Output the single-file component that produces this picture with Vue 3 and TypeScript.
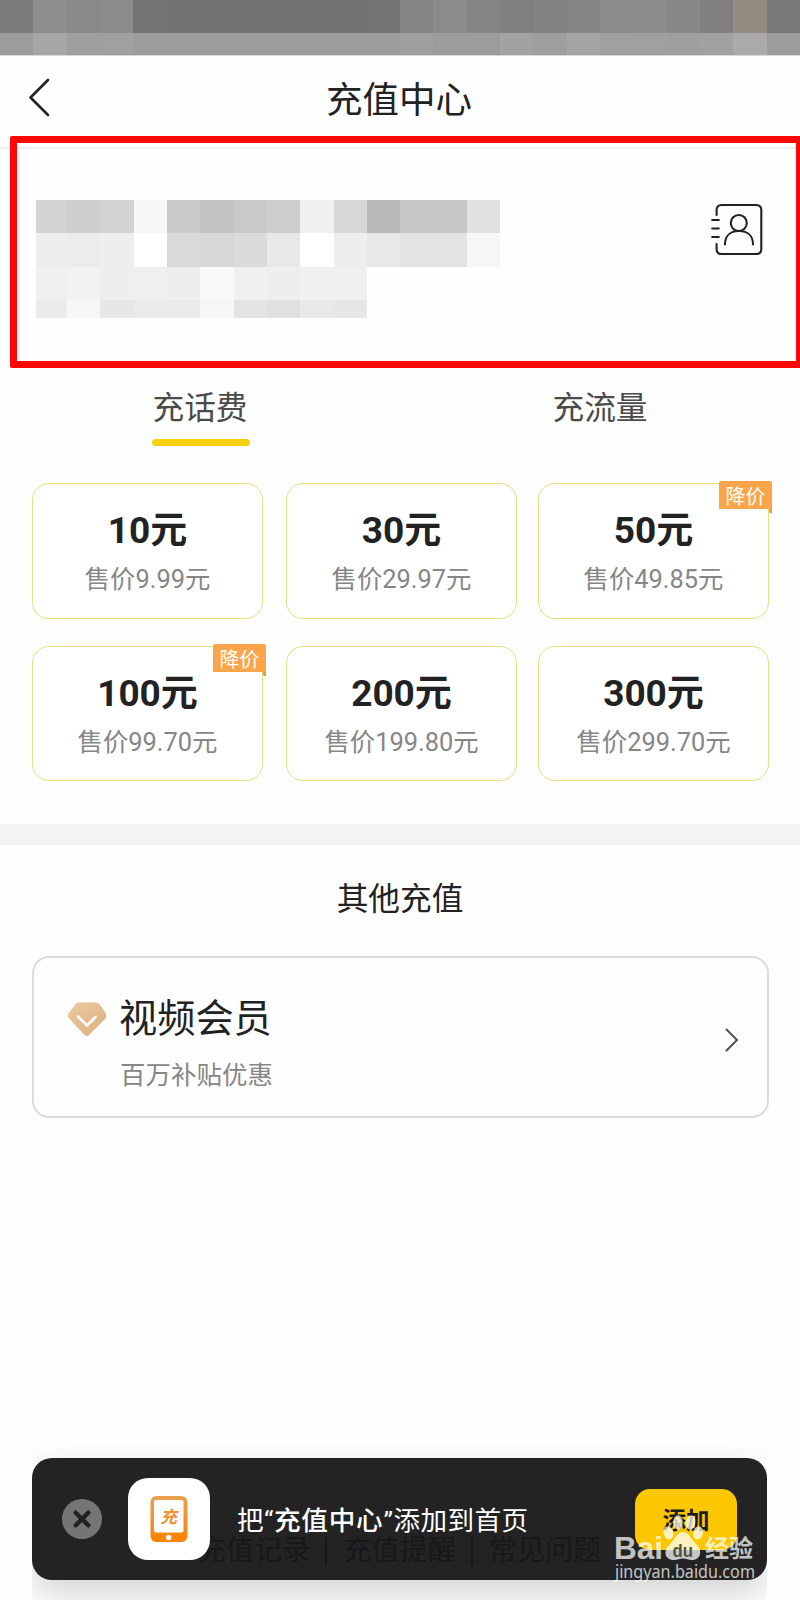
<script setup lang="ts">
interface Plan {
  amount: number
  price: string
  reduced?: boolean
}

const plans: Plan[] = [
  { amount: 10, price: '9.99' },
  { amount: 30, price: '29.97' },
  { amount: 50, price: '49.85', reduced: true },
  { amount: 100, price: '99.70', reduced: true },
  { amount: 200, price: '199.80' },
  { amount: 300, price: '299.70' },
]

const footerLinks: string[] = ['充值记录', '充值提醒', '常见问题']

// Pixelated blocks that hide the status bar and the phone number
const statusTop: string[] = [
  '#7c7c7c', '#8e8e8e', '#898989', '#8b8b8b', '#737373', '#727272', '#727272', '#727272', '#727272',
  '#727272', '#727272', '#757575', '#858585', '#8b8b8b', '#848484', '#808080', '#838383', '#858585',
  '#8b8b8b', '#8d8d8d', '#888888', '#7f7f7f', '#958b80', '#7a7876',
]
const statusBottom: string[] = [
  '#9c9c9c', '#a7a7a7', '#9f9f9f', '#a0a0a0', '#9d9d9d', '#9d9d9d', '#9d9d9d', '#9d9d9d', '#9d9d9d',
  '#9d9d9d', '#9d9d9d', '#9d9d9d', '#9f9f9f', '#9c9c9c', '#9c9c9c', '#a2a2a2', '#9e9e9e', '#a4a4a4',
  '#a0a0a0', '#a0a0a0', '#9f9f9f', '#a1a1a1', '#aaaaaa', '#9d9d9d',
]
const maskRows: string[][] = [
  ['#d4d4d4', '#cfcfcf', '#d3d3d3', '#f7f7f7', '#cacaca', '#c3c3c3', '#c9c9c9', '#cfcfcf', '#f0f0f0', '#d7d7d7', '#b9b9b9', '#c7c7c7', '#c7c7c7', '#e2e2e2'],
  ['#ededed', '#ececec', '#eeeeee', '#ffffff', '#d9d9d9', '#d7d7d7', '#dbdbdb', '#e8e8e8', '#ffffff', '#eeeeee', '#e8e8e8', '#e3e3e3', '#e3e3e3', '#f6f6f6'],
  ['#f0f0f0', '#f2f2f2', '#eeeeee', '#efefef', '#eeeeee', '#f9f9f9', '#f0f0f0', '#eeeeee', '#f0f0f0', '#f0f0f0'],
  ['#ebebeb', '#f7f7f7', '#e7e7e7', '#eaeaea', '#eaeaea', '#f6f6f6', '#e3e3e3', '#e0e0e0', '#e8e8e8', '#e6e6e6'],
]
</script>

<template>
  <div class="page">
    <div class="status">
      <div class="status-row top">
        <i v-for="(c, i) in statusTop" :key="i" :style="{ background: c }"></i>
      </div>
      <div class="status-row">
        <i v-for="(c, i) in statusBottom" :key="i" :style="{ background: c }"></i>
      </div>
    </div>

    <header class="header">
      <svg class="back" width="24" height="42" viewBox="0 0 24 42">
        <path d="M21 3 L3.500 20.500 L21 38" fill="none" stroke="#222" stroke-width="2.600" stroke-linecap="round" stroke-linejoin="round" />
      </svg>
      <h1>充值中心</h1>
    </header>

    <section class="phone">
      <div class="mask">
        <div v-for="(row, r) in maskRows" :key="r" class="mask-row">
          <i v-for="(c, i) in row" :key="i" :style="{ background: c }"></i>
        </div>
      </div>
      <svg class="contacts" width="54" height="54" viewBox="0 0 54 54" fill="none" stroke="#222" stroke-width="2.100" stroke-linecap="round">
        <path d="M6.600 12 V7 Q6.600 2 11.600 2 H46.300 Q51.300 2 51.300 7 V46 Q51.300 51 46.300 51 H11.600 Q6.600 51 6.600 46 V41" />
        <path d="M2.200 17 H8.800 M2.200 25.500 H8.800 M2.200 34 H8.800" />
        <circle cx="28.800" cy="20" r="8" />
        <path d="M15 41.500 C15 32 21.300 28 28.900 28 C36.600 28 43 32 43 41.500" />
      </svg>
      <div class="highlight"></div>
    </section>

    <nav class="tabs">
      <div class="tab active">充话费</div>
      <div class="tab">充流量</div>
    </nav>

    <section class="plans">
      <div v-for="p in plans" :key="p.amount" class="plan">
        <div class="amount">{{ p.amount }}元</div>
        <div class="price">售价{{ p.price }}元</div>
        <span v-if="p.reduced" class="badge">降价</span>
      </div>
    </section>

    <div class="divider"></div>

    <h2>其他充值</h2>
    <section class="member">
      <svg class="gem" width="42" height="38" viewBox="0 0 42 38">
        <defs>
          <linearGradient id="gem" x1="0" y1="0" x2="1" y2="1">
            <stop offset="0" stop-color="#edc9a0" />
            <stop offset="1" stop-color="#dbb080" />
          </linearGradient>
        </defs>
        <path d="M12 1.500 H29 Q31 1.500 32.500 3 L38.500 12 Q40 15 38.500 17.500 L22.500 33.500 Q20 36.500 17 33.500 L2 17.500 Q0 15 1.700 12 L8.500 3 Q10 1.500 12 1.500Z" fill="url(#gem)" />
        <path d="M11 15.500 L20 24.500 L28.500 16" fill="none" stroke="#fff" stroke-width="2.500" stroke-linecap="round" stroke-linejoin="round" />
      </svg>
      <div class="member-text">
        <div class="member-title">视频会员</div>
        <div class="member-sub">百万补贴优惠</div>
      </div>
      <svg class="go" width="16" height="26" viewBox="0 0 16 26">
        <path d="M1.500 2.500 L12 13 L1.500 23.500" fill="none" stroke="#555" stroke-width="2.100" stroke-linecap="round" stroke-linejoin="round" />
      </svg>
    </section>

    <div class="bottom">
      <div class="toast">
        <svg class="close" width="40" height="40" viewBox="0 0 40 40">
          <circle cx="20" cy="20" r="20" fill="#757575" />
          <path d="M13.700 13.700 L26.300 26.300 M26.300 13.700 L13.700 26.300" stroke="#222" stroke-width="4.400" stroke-linecap="round" />
        </svg>
        <div class="tile">
          <svg width="38" height="46" viewBox="0 0 38 46">
            <defs>
              <linearGradient id="phone" x1="0" y1="0" x2="0" y2="1">
                <stop offset="0" stop-color="#e8a050" />
                <stop offset="1" stop-color="#fb8200" />
              </linearGradient>
            </defs>
            <rect x=".5" width="37" height="46" rx="6" fill="url(#phone)" />
            <rect x="4" y="4" width="29.500" height="32.500" rx="2" fill="#fff" />
            <circle cx="18.700" cy="41.500" r="2.700" fill="#fff" />
            <text class="tile-char" x="18.500" y="27" text-anchor="middle">充</text>
          </svg>
        </div>
        <p class="message">把“<b>充值中心</b>”添加到首页</p>
        <button class="add">添加</button>
      </div>
      <div class="links">
        <span v-for="l in footerLinks" :key="l">{{ l }}</span>
      </div>
    </div>

    <svg class="watermark" width="150" height="80" viewBox="0 0 150 80">
      <g fill="#fff" fill-opacity=".74">
        <text class="latin" x="2" y="49" textLength="49" lengthAdjust="spacingAndGlyphs">Bai</text>
        <ellipse cx="56.500" cy="23" rx="5" ry="6.600" transform="rotate(-12 56.500 23)" />
        <ellipse cx="66" cy="12.500" rx="4.800" ry="7.200" />
        <ellipse cx="78.500" cy="12.500" rx="4.800" ry="7.200" transform="rotate(8 78.500 12.500)" />
        <ellipse cx="86" cy="23" rx="5" ry="6.600" transform="rotate(14 86 23)" />
        <path d="M71 22 C77 22 79 29 84 34 C91 40 89 50 80 50 C76 50 74 48.500 71 48.500 C68 48.500 66 50 62 50 C52 50 51 40 58 34 C63 29 65 22 71 22Z" />
        <text class="han" x="93" y="47" textLength="48" lengthAdjust="spacingAndGlyphs">经验</text>
        <text class="host" x="3" y="67.500" textLength="140" lengthAdjust="spacingAndGlyphs">jingyan.baidu.com</text>
      </g>
      <text class="du" x="60.500" y="46.500" textLength="20.500" lengthAdjust="spacingAndGlyphs">du</text>
    </svg>
  </div>
</template>

<style>
body {
  background: #fefefe;
}
</style>

<style scoped>
.page {
  position: relative;
  width: 800px;
  height: 1600px;
  overflow: hidden;
  display: flex;
  flex-direction: column;
  background: #fefefe;
  color: #222;
  font-family: Roboto, 'Noto Sans CJK SC', sans-serif;
}
.status {
  height: 56px;
  flex: none;
  border-bottom: 1px solid #d8d8d8;
  box-sizing: border-box;
}
.status-row {
  display: flex;
  height: 22px;
}
.status-row.top {
  height: 33px;
}
.status-row i {
  flex: 0 0 33.340px;
}
.header {
  flex: none;
  height: 91px;
  display: flex;
  align-items: center;
  justify-content: center;
  position: relative;
  border-bottom: 2px solid #f0f0f0;
}
.back {
  position: absolute;
  left: 27px;
  top: 21px;
}
h1 {
  margin: 0 2px 0 0;
  font-size: 36.500px;
  line-height: 50px;
  font-weight: 400;
  padding-bottom: 2px;
}
.phone {
  flex: none;
  position: relative;
  height: 212px;
  box-sizing: border-box;
  padding: 51px 36px 0 36px;
  display: flex;
  justify-content: space-between;
}
.mask-row {
  display: flex;
  height: 33.300px;
}
.mask-row:nth-child(4) {
  height: 18px;
}
.mask-row i {
  flex: 0 0 33.340px;
}
.mask-row i:first-child {
  flex-basis: 31px;
}
.contacts {
  margin-top: 3px;
}
.highlight {
  position: absolute;
  left: 10px;
  top: -13px;
  width: 793px;
  height: 232px;
  box-sizing: border-box;
  border: 7.500px solid #fe0606;
  border-radius: 2px;
}
.tabs {
  flex: none;
  display: flex;
  height: 86px;
  margin-top: 14px;
}
.tab {
  flex: 1;
  display: flex;
  flex-direction: column;
  align-items: center;
  padding-top: 10px;
  font-size: 31.700px;
  line-height: 48px;
  color: #4a4a4a;
}
.tab.active::after {
  content: '';
  width: 98px;
  height: 7px;
  border-radius: 4px;
  margin: 6px 0 0 2px;
  background: #f7d010;
}
.plans {
  flex: none;
  display: grid;
  grid-template-columns: 254px 252px 231px;
  row-gap: 27px;
  padding: 22px 31px 0 32px;
}
.plan {
  position: relative;
  width: 231px;
  height: 135.500px;
  box-sizing: border-box;
  border: 1.500px solid #e6e080;
  border-radius: 17px;
  text-align: center;
  background: #fff;
}
.amount {
  padding-top: 21px;
  font-size: 37px;
  line-height: 51px;
  font-weight: 700;
}
.price {
  font-size: 25.400px;
  line-height: 46px;
  color: #868686;
}
.badge {
  position: absolute;
  right: -4px;
  top: -3px;
  width: 53px;
  height: 28px;
  border-radius: 2px 2px 0 1px;
  background: #fba54a;
  color: #fff;
  font-size: 20px;
  line-height: 32px;
}
.badge::after {
  content: '';
  position: absolute;
  right: 0;
  top: 28px;
  border-top: 4px solid #f09a3a;
  border-left: 3px solid #f09a3a;
  border-bottom-left-radius: 2px;
}
.divider {
  flex: none;
  height: 21px;
  margin-top: 43px;
  background: #f3f3f3;
}
h2 {
  flex: none;
  margin: 31px 0 0;
  text-align: center;
  font-size: 31.700px;
  line-height: 48px;
  font-weight: 400;
}
.member {
  flex: none;
  display: flex;
  margin: 32px 31px 0 32px;
  height: 162px;
  box-sizing: border-box;
  border: 2px solid #dcdcdc;
  border-radius: 17px;
  padding: 34px 26px 0 33px;
}
.gem {
  margin-top: 9px;
}
.member-text {
  flex: 1;
  margin-left: 10px;
}
.member-title {
  font-size: 38.200px;
  line-height: 54px;
}
.member-sub {
  margin: 11px 0 0 1px;
  font-size: 25.500px;
  line-height: 36px;
  color: #868686;
}
.go {
  margin-top: 35px;
}
.bottom {
  position: relative;
  flex: 1;
  margin: 310px 33px 0 32px;
  padding-top: 30px;
  overflow: hidden;
}
.toast {
  height: 122px;
  box-sizing: border-box;
  border-radius: 20px;
  background: #232323;
  box-shadow: 0 14px 34px rgba(0, 0, 0, 0.17);
  display: flex;
  align-items: center;
  padding: 0 30px;
}
.tile {
  position: relative;
  z-index: 1;
  width: 82px;
  height: 82px;
  margin-left: 26px;
  border-radius: 20px;
  background: #fff;
  display: flex;
  align-items: center;
  justify-content: center;
}
.tile-char {
  font: italic 700 17px 'Noto Sans CJK SC', sans-serif;
  fill: #f29232;
}
.message {
  margin: 3px 0 0 27px;
  font-size: 26.600px;
  line-height: 40px;
  color: #fff;
  white-space: nowrap;
  letter-spacing: 0.450px;
}
.message b {
  font-weight: 500;
  letter-spacing: 0.800px;
}
.add {
  margin: 0 0 0 auto;
  width: 102px;
  height: 61px;
  border: 0;
  border-radius: 15px;
  padding: 0;
  background: #fdc700;
  color: #1c1a12;
  font-family: inherit;
  font-size: 23.500px;
  font-weight: 700;
}
.links {
  position: absolute;
  left: 166px;
  top: 103px;
  display: flex;
  font-size: 28.100px;
  line-height: 40px;
  color: #17181b;
}
.links span + span {
  position: relative;
  margin-left: 33px;
}
.links span + span::before {
  content: '';
  position: absolute;
  left: -18px;
  top: 6px;
  width: 2px;
  height: 28px;
  background: #17181b;
}
.watermark {
  position: absolute;
  left: 612px;
  top: 1510px;
}
.latin {
  font: 700 32px 'Liberation Sans', Arial, sans-serif;
}
.du {
  font: 700 19px 'Liberation Sans', Arial, sans-serif;
  fill: #565040;
}
.han {
  font: 700 24px 'Noto Sans CJK SC', sans-serif;
}
.host {
  font: 400 17.500px 'Noto Sans', sans-serif;
}
</style>
